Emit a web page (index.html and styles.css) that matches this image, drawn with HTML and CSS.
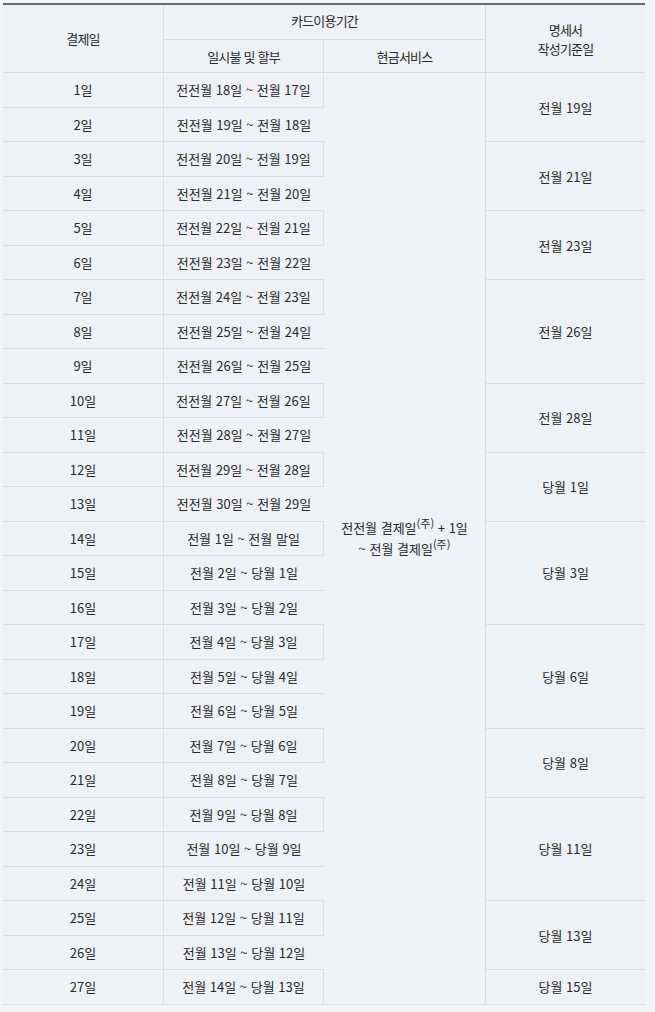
FILE: index.html
```html
<!DOCTYPE html>
<html lang="ko">
<head>
<meta charset="utf-8">
<link rel="stylesheet" href="styles.css">
</head>
<body>
<table class="tbl">
  <colgroup>
    <col class="c1"><col class="c2"><col class="c3"><col class="c4">
  </colgroup>
  <thead>
    <tr class="h1">
      <th rowspan="2" class="hd-day">결제일</th>
      <th colspan="2" class="hd-period">카드이용기간</th>
      <th rowspan="2" class="hd-stmt">명세서<br>작성기준일</th>
    </tr>
    <tr class="h2">
      <th class="hd-lump">일시불 및 할부</th>
      <th class="hd-cash">현금서비스</th>
    </tr>
  </thead>
  <tbody>
    <tr class="g"><td class="day">1일</td><td class="per">전전월 18일 ~ 전월 17일</td><td class="cash" rowspan="27">전전월 결제일<sup>(주)</sup> + 1일<br>~ 전월 결제일<sup>(주)</sup></td><td class="stmt" rowspan="2">전월 19일</td></tr>
    <tr><td class="day">2일</td><td class="per">전전월 19일 ~ 전월 18일</td></tr>
    <tr class="g"><td class="day">3일</td><td class="per">전전월 20일 ~ 전월 19일</td><td class="stmt" rowspan="2">전월 21일</td></tr>
    <tr><td class="day">4일</td><td class="per">전전월 21일 ~ 전월 20일</td></tr>
    <tr class="g"><td class="day">5일</td><td class="per">전전월 22일 ~ 전월 21일</td><td class="stmt" rowspan="2">전월 23일</td></tr>
    <tr><td class="day">6일</td><td class="per">전전월 23일 ~ 전월 22일</td></tr>
    <tr class="g"><td class="day">7일</td><td class="per">전전월 24일 ~ 전월 23일</td><td class="stmt" rowspan="3">전월 26일</td></tr>
    <tr><td class="day">8일</td><td class="per">전전월 25일 ~ 전월 24일</td></tr>
    <tr><td class="day">9일</td><td class="per">전전월 26일 ~ 전월 25일</td></tr>
    <tr class="g"><td class="day">10일</td><td class="per">전전월 27일 ~ 전월 26일</td><td class="stmt" rowspan="2">전월 28일</td></tr>
    <tr><td class="day">11일</td><td class="per">전전월 28일 ~ 전월 27일</td></tr>
    <tr class="g"><td class="day">12일</td><td class="per">전전월 29일 ~ 전월 28일</td><td class="stmt" rowspan="2">당월 1일</td></tr>
    <tr><td class="day">13일</td><td class="per">전전월 30일 ~ 전월 29일</td></tr>
    <tr class="g"><td class="day">14일</td><td class="per">전월 1일 ~ 전월 말일</td><td class="stmt" rowspan="3">당월 3일</td></tr>
    <tr><td class="day">15일</td><td class="per">전월 2일 ~ 당월 1일</td></tr>
    <tr><td class="day">16일</td><td class="per">전월 3일 ~ 당월 2일</td></tr>
    <tr class="g"><td class="day">17일</td><td class="per">전월 4일 ~ 당월 3일</td><td class="stmt" rowspan="3">당월 6일</td></tr>
    <tr><td class="day">18일</td><td class="per">전월 5일 ~ 당월 4일</td></tr>
    <tr><td class="day">19일</td><td class="per">전월 6일 ~ 당월 5일</td></tr>
    <tr class="g"><td class="day">20일</td><td class="per">전월 7일 ~ 당월 6일</td><td class="stmt" rowspan="2">당월 8일</td></tr>
    <tr><td class="day">21일</td><td class="per">전월 8일 ~ 당월 7일</td></tr>
    <tr class="g"><td class="day">22일</td><td class="per">전월 9일 ~ 당월 8일</td><td class="stmt" rowspan="3">당월 11일</td></tr>
    <tr><td class="day">23일</td><td class="per">전월 10일 ~ 당월 9일</td></tr>
    <tr><td class="day">24일</td><td class="per">전월 11일 ~ 당월 10일</td></tr>
    <tr class="g"><td class="day">25일</td><td class="per">전월 12일 ~ 당월 11일</td><td class="stmt" rowspan="2">당월 13일</td></tr>
    <tr><td class="day">26일</td><td class="per">전월 13일 ~ 당월 12일</td></tr>
    <tr class="g"><td class="day">27일</td><td class="per">전월 14일 ~ 당월 13일</td><td class="stmt">당월 15일</td></tr>
  </tbody>
</table>
</body>
</html>
```
FILE: styles.css
```css
html, body {
  margin: 0;
  padding: 0;
  background: #f2f4f8;
}
body {
  padding: 3px 10px 0 3px;
  font-family: "Noto Sans CJK KR", "Noto Sans", sans-serif;
  font-size: 13px;
  color: #2a2a2a;
}
.tbl {
  width: 642px;
  border-collapse: separate;
  border-spacing: 0;
  table-layout: fixed;
  background: #eef1f5;
  border-top: 2px solid #6a6a6a;
}
.c1 { width: 161px; }
.c2 { width: 160px; }
.c3 { width: 161px; }
.c4 { width: 160px; }
th, td {
  padding: 0;
  text-align: center;
  vertical-align: middle;
  font-weight: normal;
  border-bottom: 1px solid #d9dde3;
  line-height: 17px;
}
th {
  letter-spacing: -0.8px;
}
.h1 { height: 35px; }
.h2 { height: 33px; }
tbody tr { height: 34.5px; }
.hd-day { border-right: 1px solid #d9dde3; }
.hd-period { padding-bottom: 4px; }
.hd-lump { border-right: 1px solid #d9dde3; }
.hd-stmt {
  border-left: 1px solid #d9dde3;
  line-height: 19px;
}
.day { border-right: 1px solid #d9dde3; }
.g .per { border-right: 1px solid #d9dde3; }
.stmt { border-left: 1px solid #d9dde3; }
.cash { line-height: 21px; }
.cash sup {
  font-size: 11px;
  line-height: 0;
  vertical-align: 5px;
}
```
